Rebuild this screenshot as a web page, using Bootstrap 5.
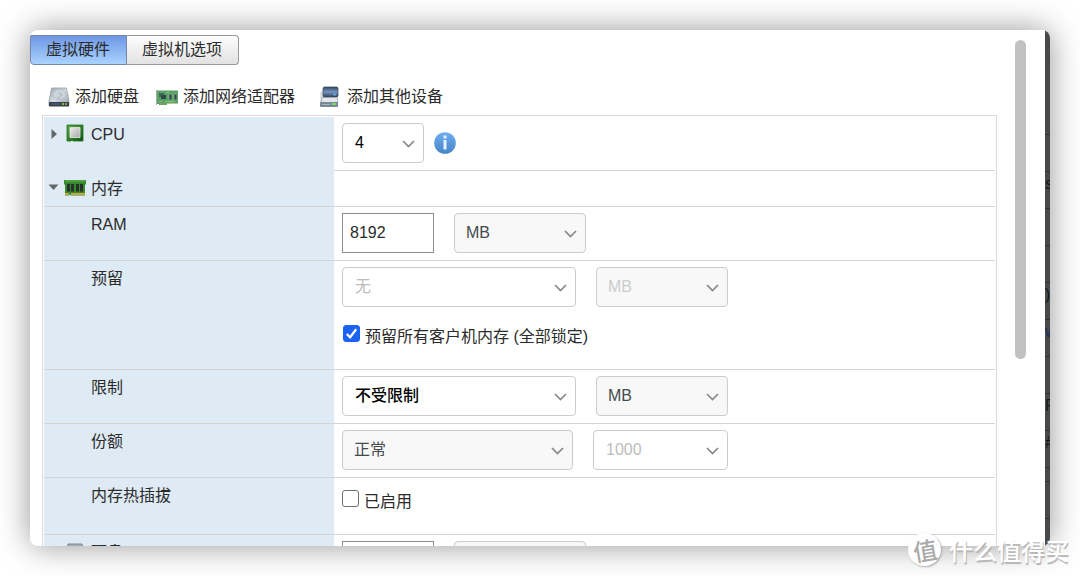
<!DOCTYPE html>
<html lang="zh-CN">
<head>
<meta charset="utf-8">
<meta name="viewport" content="width=device-width, initial-scale=1">
<title>虚拟硬件</title>
<link href="https://cdn.jsdelivr.net/npm/bootstrap@5.3.0/dist/css/bootstrap.min.css" rel="stylesheet">
<style>
  body { font: 16px/24px "Liberation Sans", "Noto Sans CJK SC", sans-serif; color: #2b2b2b; background: #fff; }
  .stage { padding: 30px; }
  .dialog-window { border-radius: 8px; box-shadow: 0 0 32px rgba(0,0,0,.42); }
  .dialog-shell { border-radius: 8px; background: #fff; }
  .main-pane { padding: 5px 0 0; min-width: 0; }
  .tab-button { height: 30px; padding: 0 16px; border: 1px solid #999; color: #2b2b2b; font-size: 16px; line-height: 26px; background: linear-gradient(#fdfdfd, #e2e2e2); }
  .tab-button:last-child { border-radius: 0 4px 4px 0; border-left: 0; padding: 0 16px 0 15px; }
  .tab-button.current { padding: 0 16px 0 15px; background: linear-gradient(#6e97e6, #a9d3ff); border-color: #7687a8; border-radius: 0 0 0 4px; }
  .tool-row { margin: 20px 0 6px 18px; gap: 17px; }
  .tool-button { gap: 5px; color: #2b2b2b; }
  .icon-box { width: 22px; height: 22px; flex: none; }
  .info-mark { margin-left: 10px; }
  .settings { margin-left: 12px; padding: 1px 1px 0; border: 1px solid #d9d9d9; border-bottom: 0; }
  .line-under { border-bottom: 1px solid #d4d4d4; }
  .label-cell { width: 290px; flex: none; padding-top: 6px; background: #deeaf4; }
  .value-cell { padding: 6px 8px 7px; }
  .twisty { width: 20px; height: 22px; flex: none; }
  .label-text { margin-left: 5px; }
  .label-indent { margin-left: 47px; }
  .field-gap { gap: 20px; }
  .row-brief { height: 36px; }
  .row-tall { height: 109px; }
  .row-check { height: 57px; }
  .pick.form-select { height: 40px; padding: 0 30px 0 12px; border: 1px solid #ccc; border-radius: 4px; color: #111; font-size: 16px; line-height: 24px; background-color: #fff; background-position: right 8px center; background-size: 13px 13px;
    background-image: url("data:image/svg+xml,%3Csvg xmlns='http://www.w3.org/2000/svg' viewBox='0 0 13 13'%3E%3Cpath d='M1 4 6.5 9.500 12 4' fill='none' stroke='%23888' stroke-width='1.7'/%3E%3C/svg%3E"); }
  .pick.soft { background-color: #f8f8f8; color: #444b4e; padding-left: 11px; }
  .pick:disabled { color: #bdbdbd; opacity: 1; }
  .pick.soft:disabled { color: #ccc; }
  .pick.strong { font-weight: 500; color: #000; }
  .w-count { width: 82px; }
  .w-unit { width: 132px; }
  .w-wide { width: 234px; }
  .w-level { width: 231px; }
  .w-shares { width: 135px; }
  .amount.form-control { width: 92px; height: 40px; padding: 0 7px; border: 1px solid #8f8f8f; border-radius: 0; font-size: 16px; color: #2b2b2b; }
  .tick.form-check-input { width: 17px; height: 17px; margin: 0; border: 1px solid #6f6f6f; border-radius: 3px; flex: none; }
  .tick.form-check-input:checked { background-color: #1c62f2; border-color: #1c62f2;
    background-image: url("data:image/svg+xml,%3Csvg xmlns='http://www.w3.org/2000/svg' viewBox='0 0 16 16'%3E%3Cpath d='M3 8.500 6.500 12 13 3.500' fill='none' stroke='white' stroke-width='2.400'/%3E%3C/svg%3E"); }
  .tick-label { padding: 4px 0 0 5px; }
  .first-tick { margin: 18px 0 0 1px; }
  .lone-tick { margin-top: 6px; }
  .scroll-lane { width: 48px; padding: 10px 19px 0 18px; }
  .scroll-thumb { height: 63%; border-radius: 6px; background: #c1c1c1; }
  .behind { width: 5px; background: #484a4a; color: #161818; font-size: 16px; }
  .behind > div { flex: none; border-bottom: 1px solid #303232; }
  .behind .b-head { height: 105px; }
  .behind .b-line { height: 37px; }
  .behind .b-slim { height: 14px; }
  .behind .b-blue { color: #1b2c5c; }
  .stamp { right: 11px; bottom: 10px; color: #fff; gap: 8px; font: 500 24px/32px "Noto Sans CJK SC", sans-serif; text-shadow: 1px 2px 1px #b4b4b4; pointer-events: none; }
  .stamp-disc { width: 33px; height: 33px; background: #fff; color: #aaa; text-shadow: none; box-shadow: 1px 1px 2px #aaa; }
  .stamp-disc span { transform: rotate(-10deg); }
</style>
</head>
<body>
<div class="stage vh-100 position-relative overflow-hidden">
  <div class="dialog-window h-100">
    <div class="dialog-shell h-100 d-flex overflow-hidden">
      <main class="main-pane flex-grow-1 overflow-hidden">
        <div class="d-flex">
          <button type="button" class="tab-button current">虚拟硬件</button>
          <button type="button" class="tab-button">虚拟机选项</button>
        </div>

        <div class="tool-row d-flex">
          <button type="button" class="tool-button d-flex align-items-center border-0 bg-transparent p-0">
            <svg class="icon-box" viewBox="0 0 22 22" aria-hidden="true">
              <defs><linearGradient id="metal" x1="0" y1="0" x2="1" y2="1"><stop offset="0" stop-color="#a1a9b3"/><stop offset=".5" stop-color="#d5dbe2"/><stop offset="1" stop-color="#939ca7"/></linearGradient></defs>
              <path d="M3.500 2h15l2.500 13v4.500h-20v-4.500z" fill="url(#metal)" stroke="#8d959f" stroke-width=".7"/>
              <ellipse cx="11.500" cy="8.500" rx="6.500" ry="5" fill="#cdd4dc" stroke="#b4bbc4" stroke-width=".8"/>
              <path d="M11 7.500c2-.5 3 .5 2 2l-3.500 3.500" fill="none" stroke="#a3abb5" stroke-width="1"/>
              <path d="M1 16h20v4.500H1z" fill="#38434f"/><path d="M3 18h9" stroke="#596776"/>
              <path d="M14 18h2" stroke="#7bbf3f" stroke-width="2"/><path d="M17 18h2" stroke="#8b983a" stroke-width="2"/>
            </svg>
            <span>添加硬盘</span>
          </button>
          <button type="button" class="tool-button d-flex align-items-center border-0 bg-transparent p-0">
            <svg class="icon-box" viewBox="0 0 22 22" aria-hidden="true">
              <path d="M1 4.500h21v13H11V19H3v-1H1z" fill="#58a064"/>
              <path d="M.5 4v15" stroke="#a5b0a5" stroke-width="1"/>
              <path d="M3 7h5v4H3z" fill="#3c6b58"/><path d="M5 9h5v4H5z" fill="#2b484a"/>
              <path d="M13 8h3v6h-3zM18 8h3v6h-3z" fill="#31474c" stroke="#85bc88" stroke-width=".7"/>
              <path d="M3 15.500h3M9 15.500h9M10 6.500h3" stroke="#86c18a" stroke-width="1"/>
              <path d="M4 18h7M13 17h8" stroke="#b9ae5b" stroke-dasharray="1 1"/>
            </svg>
            <span>添加网络适配器</span>
          </button>
          <button type="button" class="tool-button d-flex align-items-center border-0 bg-transparent p-0 ms-2">
            <svg class="icon-box" viewBox="0 0 22 22" aria-hidden="true">
              <defs><linearGradient id="bluecase" x1="0" y1="0" x2="0" y2="1"><stop offset="0" stop-color="#324762"/><stop offset=".5" stop-color="#7795bf"/><stop offset="1" stop-color="#2f435b"/></linearGradient></defs>
              <path d="M1 6h5v10H1z" fill="#e4e8ec" stroke="#b2bac2" stroke-width=".7"/>
              <rect x="3" y="1" width="15" height="10" rx="1.500" fill="url(#bluecase)" stroke="#33455c" stroke-width=".7"/>
              <path d="M13 8.500h3" stroke="#62b4ed" stroke-width="1.500"/>
              <path d="M2 11.500h15l1 5H1z" fill="#e3e7ea" stroke="#8c97a2" stroke-width=".7"/>
              <rect x="0" y="16" width="18" height="5" rx="1" fill="#7b8996"/><path d="M2 18.500h8" stroke="#a8b4be"/><path d="M12 18h4" stroke="#78da65" stroke-width="2"/>
            </svg>
            <span class="ms-n1">添加其他设备</span>
          </button>
        </div>

        <form class="settings">
          <div class="d-flex">
            <div class="label-cell d-flex">
              <svg class="twisty" viewBox="0 0 20 22" aria-hidden="true"><path d="M7.500 6v10l5.500-5z" fill="#666"/></svg>
              <svg class="icon-box" viewBox="0 0 22 22" aria-hidden="true">
                <defs><linearGradient id="chip" x1="0" y1="0" x2="1" y2="1"><stop offset="0" stop-color="#f0f0f0"/><stop offset="1" stop-color="#a6a6a6"/></linearGradient>
                <linearGradient id="board" x1="0" y1="0" x2="1" y2="1"><stop offset="0" stop-color="#5cac42"/><stop offset="1" stop-color="#0b5412"/></linearGradient></defs>
                <path d="M3 2h16v16H9l-1-1-1 1H3z" fill="url(#board)" stroke="#206d1c" stroke-width=".8"/>
                <path d="M6 4.500h10v10H6z" fill="url(#chip)" stroke="#e2ece0" stroke-width=".8"/>
              </svg>
              <label class="label-text" for="cpu">CPU</label>
            </div>
            <div class="value-cell line-under flex-grow-1 d-flex align-items-center">
              <select id="cpu" class="form-select pick strong w-count"><option>4</option></select>
              <svg class="icon-box info-mark" viewBox="0 0 22 22" role="img" aria-label="信息">
                <defs><linearGradient id="info" x1="0" y1="0" x2="0" y2="1"><stop offset="0" stop-color="#71adf0"/><stop offset="1" stop-color="#4684c9"/></linearGradient></defs>
                <circle cx="11" cy="11" r="10.800" fill="url(#info)"/>
                <path d="M11 3.500v3M11 8v9.500" stroke="#e8f2fd" stroke-width="3"/>
              </svg>
            </div>
          </div>

          <div class="row-brief line-under d-flex">
            <div class="label-cell d-flex">
              <svg class="twisty" viewBox="0 0 20 22" aria-hidden="true"><path d="M4.500 7.500h10L9.500 13z" fill="#666"/></svg>
              <svg class="icon-box" viewBox="0 0 22 22" aria-hidden="true">
                <path d="M0 3h22v4l-1 1v10.500H7l-1-1-1 1H1V8L0 7z" fill="#348a2c"/><path d="M1 4h20" stroke="#6eb552"/>
                <path d="M3 7h3v7.500H3zM7 7h3v7.500H7zM12 7h3v7.500h-3zM16 7h3v7.500h-3z" fill="#28302a"/>
                <path d="M1 17h4M7 17h14" stroke="#c6a43f" stroke-width="2"/>
              </svg>
              <span class="label-text">内存</span>
            </div>
          </div>

          <div class="line-under d-flex">
            <div class="label-cell"><label class="label-indent" for="ram">RAM</label></div>
            <div class="value-cell d-flex field-gap">
              <input id="ram" class="form-control amount" type="text" value="8192">
              <select class="form-select pick soft w-unit" aria-label="RAM 单位"><option>MB</option></select>
            </div>
          </div>

          <div class="row-tall line-under d-flex">
            <div class="label-cell"><label class="label-indent" for="reserve">预留</label></div>
            <div class="value-cell">
              <div class="d-flex field-gap">
                <select id="reserve" class="form-select pick w-wide" disabled><option>无</option></select>
                <select class="form-select pick soft w-unit" aria-label="预留单位" disabled><option>MB</option></select>
              </div>
              <div class="first-tick d-flex">
                <input id="lockall" class="form-check-input tick" type="checkbox" checked>
                <label class="tick-label lh-1" for="lockall">预留所有客户机内存 (全部锁定)</label>
              </div>
            </div>
          </div>

          <div class="line-under d-flex">
            <div class="label-cell"><label class="label-indent" for="limit">限制</label></div>
            <div class="value-cell d-flex field-gap">
              <select id="limit" class="form-select pick strong w-wide"><option>不受限制</option></select>
              <select class="form-select pick soft w-unit" aria-label="限制单位"><option>MB</option></select>
            </div>
          </div>

          <div class="line-under d-flex">
            <div class="label-cell"><label class="label-indent" for="level">份额</label></div>
            <div class="value-cell d-flex field-gap">
              <select id="level" class="form-select pick soft w-level"><option>正常</option></select>
              <select class="form-select pick w-shares" aria-label="份额数值" disabled><option>1000</option></select>
            </div>
          </div>

          <div class="row-check line-under d-flex">
            <div class="label-cell"><span class="label-indent">内存热插拔</span></div>
            <div class="value-cell">
              <div class="lone-tick d-flex">
                <input id="hotplug" class="form-check-input tick" type="checkbox">
                <label class="tick-label lh-1" for="hotplug">已启用</label>
              </div>
            </div>
          </div>

          <div class="d-flex">
            <div class="label-cell d-flex">
              <span class="twisty"></span>
              <svg class="icon-box" viewBox="0 0 22 22" aria-hidden="true"><path d="M4 3h14l2 12v5H2v-5z" fill="#a3adb7" stroke="#7f8993"/></svg>
              <label class="label-text" for="disk">硬盘</label>
            </div>
            <div class="value-cell d-flex field-gap">
              <input id="disk" class="form-control amount" type="text">
              <select class="form-select pick soft w-unit" aria-label="硬盘单位"><option></option></select>
            </div>
          </div>
        </form>
      </main>
      <div class="scroll-lane flex-shrink-0"><div class="scroll-thumb"></div></div>
      <div class="behind flex-shrink-0 d-flex flex-column overflow-hidden" aria-hidden="true">
        <div class="b-head"></div>
        <div class="b-line"></div>
        <div class="b-line">s</div>
        <div class="b-line"></div>
        <div class="b-line"></div>
        <div class="b-line">)</div>
        <div class="b-line b-blue">w</div>
        <div class="b-line"></div>
        <div class="b-line">F</div>
        <div class="b-line">#</div>
        <div class="b-slim"></div>
        <div class="b-line"></div>
      </div>
    </div>
  </div>
  <div class="stamp position-absolute d-flex align-items-center">
    <div class="stamp-disc rounded-circle d-flex align-items-center justify-content-center"><span>值</span></div>
    <span>什么值得买</span>
  </div>
</div>
<script src="https://cdn.jsdelivr.net/npm/bootstrap@5.3.0/dist/js/bootstrap.bundle.min.js"></script>
</body>
</html>
